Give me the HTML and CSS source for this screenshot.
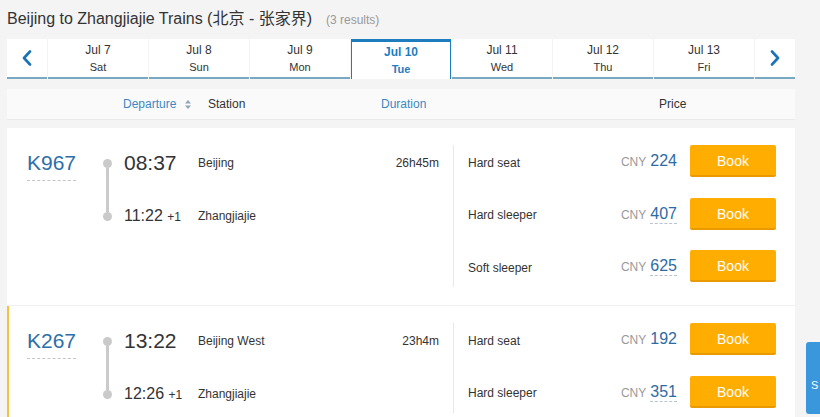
FILE: index.html
```html
<!DOCTYPE html>
<html lang="en">
<head>
<meta charset="utf-8">
<title>Beijing to Zhangjiajie Trains</title>
<link rel="stylesheet" href="styles.css">
</head>
<body>
<div class="page">
  <h1 class="title">Beijing to Zhangjiajie Trains <span class="cn">(北京 - 张家界)</span><span class="count">(3 results)</span></h1>

  <div class="dates">
    <div class="arrow"><svg width="10" height="16" viewBox="0 0 10 16"><polyline points="8,1.5 2,8 8,14.5" fill="none" stroke="#1a73b6" stroke-width="2.6" stroke-linecap="round" stroke-linejoin="round"/></svg></div>
    <div class="date"><span class="d">Jul 7</span><span class="w">Sat</span></div>
    <div class="date"><span class="d">Jul 8</span><span class="w">Sun</span></div>
    <div class="date"><span class="d">Jul 9</span><span class="w">Mon</span></div>
    <div class="date active"><span class="d">Jul 10</span><span class="w">Tue</span></div>
    <div class="date"><span class="d">Jul 11</span><span class="w">Wed</span></div>
    <div class="date"><span class="d">Jul 12</span><span class="w">Thu</span></div>
    <div class="date"><span class="d">Jul 13</span><span class="w">Fri</span></div>
    <div class="arrow"><svg width="10" height="16" viewBox="0 0 10 16"><polyline points="2,1.5 8,8 2,14.5" fill="none" stroke="#1a73b6" stroke-width="2.6" stroke-linecap="round" stroke-linejoin="round"/></svg></div>
  </div>

  <div class="thead">
    <div class="th-dep">Departure <svg width="6" height="9" viewBox="0 0 6 9"><polygon points="3,0 6,3.5 0,3.5" fill="#8da6b8"/><polygon points="0,5.5 6,5.5 3,9" fill="#8da6b8"/></svg></div>
    <div class="th-station">Station</div>
    <div class="th-dur">Duration</div>
    <div class="th-price">Price</div>
  </div>

  <div class="card">
    <div class="trip">
      <span class="train">K967</span>
      <div class="timeline"><span class="dot"></span><span class="line"></span><span class="dot"></span></div>
      <span class="time dep">08:37</span>
      <span class="station">Beijing</span>
      <span class="dur">26h45m</span>
      <span class="time arr">11:22 <small>+1</small></span>
      <span class="station arr-st">Zhangjiajie</span>
    </div>
    <div class="fares">
      <div class="fare"><span class="seat">Hard seat</span><span class="cny">CNY</span><span class="amt">224</span><button class="book">Book</button></div>
      <div class="fare"><span class="seat">Hard sleeper</span><span class="cny">CNY</span><span class="amt dashed">407</span><button class="book">Book</button></div>
      <div class="fare"><span class="seat">Soft sleeper</span><span class="cny">CNY</span><span class="amt dashed">625</span><button class="book">Book</button></div>
    </div>
  </div>

  <div class="card hl">
    <div class="trip">
      <span class="train">K267</span>
      <div class="timeline"><span class="dot"></span><span class="line"></span><span class="dot"></span></div>
      <span class="time dep">13:22</span>
      <span class="station">Beijing West</span>
      <span class="dur">23h4m</span>
      <span class="time arr">12:26 <small>+1</small></span>
      <span class="station arr-st">Zhangjiajie</span>
    </div>
    <div class="fares">
      <div class="fare"><span class="seat">Hard seat</span><span class="cny">CNY</span><span class="amt">192</span><button class="book">Book</button></div>
      <div class="fare"><span class="seat">Hard sleeper</span><span class="cny">CNY</span><span class="amt dashed">351</span><button class="book">Book</button></div>
    </div>
  </div>
</div>
<div class="side">S</div>
</body>
</html>
```
FILE: styles.css
```css
body {
  margin: 0;
  background: #f4f4f4;
  font-family: "Liberation Sans", Arial, sans-serif;
  color: #333;
  overflow: hidden;
}
.page {
  width: 788px;
  padding: 9px 0 0 7px;
}
.title {
  margin: 0;
  font-size: 16px;
  font-weight: normal;
  line-height: 20px;
  white-space: nowrap;
}
.title .cn {
  font-family: "Liberation Sans", "Noto Sans CJK SC", sans-serif;
}
.count {
  font-size: 12px;
  color: #999;
  margin-left: 14px;
}

/* date tabs */
.dates {
  display: flex;
  gap: 1px;
  margin-top: 9px;
  height: 40px;
}
.dates > div {
  background: #fff;
  border-bottom: 2px solid #79a8c3;
  box-sizing: border-box;
}
.arrow {
  width: 40px;
  display: flex;
  align-items: center;
  justify-content: center;
}
.date {
  width: 100px;
  display: flex;
  flex-direction: column;
  align-items: center;
  justify-content: center;
  padding-top: 2px;
  font-size: 12px;
  line-height: 17px;
}
.date .w {
  font-size: 11px;
}
.dates > .date.active {
  border: 1px solid #1e7dbf;
  border-top-width: 3px;
  border-bottom: none;
  padding-top: 0;
  color: #1e7dbf;
  font-weight: bold;
}

/* table head */
.thead {
  display: flex;
  align-items: center;
  height: 30px;
  margin-top: 10px;
  padding-left: 116px;
  background: #fafafa;
  box-shadow: 0 1px 0 #e9e9e9;
  font-size: 12px;
}
.th-dep {
  width: 85px;
  display: flex;
  align-items: center;
  gap: 9px;
  color: #3a89c3;
}
.th-station { width: 173px; }
.th-dur { width: 278px; color: #3a89c3; }

/* cards */
.card {
  display: flex;
  align-items: flex-start;
  background: #fff;
  padding: 17px 0 18px;
}
.thead + .card { margin-top: 9px; }
.card + .card { border-top: 1px solid #f0f0f0; }
.card.hl { box-shadow: inset 2px 0 0 #f4c23f; }

.trip {
  width: 446px;
  flex: none;
  box-sizing: border-box;
  padding: 0 14px 0 20px;
  display: grid;
  grid-template-columns: 70px 20px 81px 1fr auto;
  grid-template-rows: 36px 36px;
  row-gap: 17px;
}
.train {
  grid-column: 1;
  grid-row: 1;
  justify-self: start;
  align-self: start;
  margin-top: 6px;
  font-size: 21px;
  line-height: 24px;
  padding-bottom: 5px;
  color: #2d6eaa;
  border-bottom: 1px dashed #c4c4c4;
}
.timeline {
  grid-column: 2;
  grid-row: 1 / 3;
  display: flex;
  flex-direction: column;
  align-items: center;
  padding: 13.5px 0;
}
.dot {
  width: 9px;
  height: 9px;
  border-radius: 50%;
  background: #cacaca;
  flex: none;
}
.line {
  width: 3px;
  flex: 1;
  background: #cacaca;
}
.time {
  grid-column: 3;
  padding-left: 7px;
  align-self: center;
  white-space: nowrap;
}
.time.dep { grid-row: 1; font-size: 21px; }
.time.arr { grid-row: 2; font-size: 16px; }
.time small { font-size: 12px; }
.station {
  grid-column: 4;
  grid-row: 1;
  align-self: center;
  font-size: 12px;
}
.station.arr-st { grid-row: 2; }
.dur {
  grid-column: 5;
  grid-row: 1;
  align-self: center;
  justify-self: end;
  font-size: 12px;
}

.fares {
  flex: 1;
  border-left: 1px solid #e8e8e8;
  padding: 0 19px 5px 14px;
  display: flex;
  flex-direction: column;
  gap: 20.5px;
}
.fare {
  display: flex;
  align-items: center;
  height: 32px;
}
.seat {
  flex: 1;
  font-size: 12px;
  margin-top: 3px;
}
.cny {
  font-size: 12px;
  color: #999;
  margin-right: 4px;
  margin-top: 2px;
}
.amt {
  font-size: 16px;
  color: #2e6ba6;
  line-height: 19px;
  border-bottom: 1px solid transparent;
}
.amt.dashed { border-bottom: 1px dashed #b9c3cf; }
.book {
  margin-left: 13px;
  width: 86px;
  height: 32px;
  padding: 2px 0 0;
  background: #ffad00;
  border: none;
  border-bottom: 2px solid #e89a00;
  border-radius: 2px;
  color: #fff;
  font-family: "Liberation Sans", Arial, sans-serif;
  font-size: 14px;
}

.side {
  position: fixed;
  left: 806px;
  top: 342px;
  width: 14px;
  height: 72px;
  box-sizing: border-box;
  padding: 36px 0 0 5px;
  background: #3b97db;
  border-radius: 3px 0 0 3px;
  color: #fff;
  font-size: 11px;
  line-height: 14px;
}
```
